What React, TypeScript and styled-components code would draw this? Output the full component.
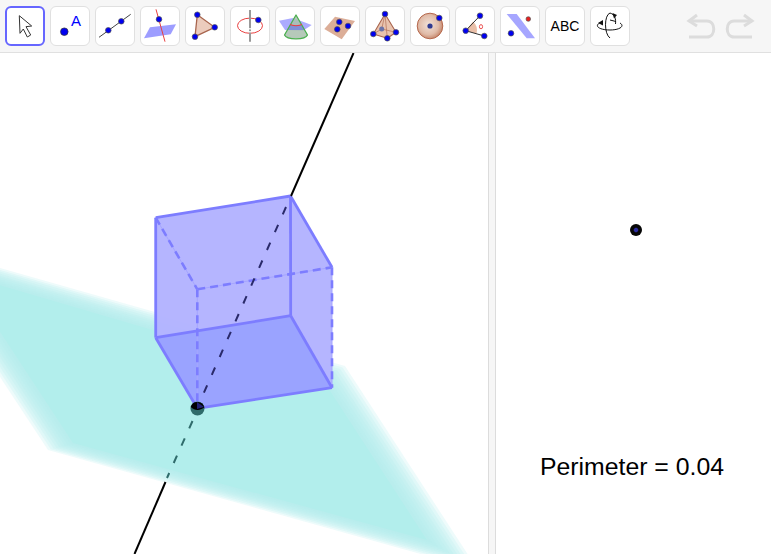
import React from "react";
import styled, { createGlobalStyle } from "styled-components";

const Global = createGlobalStyle`
  html, body { margin: 0; padding: 0; background: #fff; }
  body { font-family: "Liberation Sans", Arial, sans-serif; overflow: hidden; }
`;

const Page = styled.div`
  width: 771px;
  height: 554px;
  display: flex;
  flex-direction: column;
  background: #fff;
`;

const Toolbar = styled.div`
  height: 53px;
  box-sizing: border-box;
  flex: none;
  display: flex;
  align-items: flex-start;
  padding: 6px 0 0 5px;
  background: #f6f6f6;
  border-bottom: 1px solid #e0e0e0;
`;

const Tools = styled.div`
  display: flex;
  gap: 5px;
`;

const ToolButton = styled.div<{ $active?: boolean }>`
  width: 40px;
  height: 40px;
  box-sizing: border-box;
  display: flex;
  align-items: center;
  justify-content: center;
  background: #fff;
  border-radius: 6px;
  border: ${(p) => (p.$active ? "2px solid #6666ff" : "1px solid #e0e0e0")};
  font-size: 14px;
  color: #000;
  overflow: hidden;
`;

const History = styled.div`
  margin-left: 56px;
  margin-top: 7px;
  display: flex;
  gap: 9px;
`;

const Main = styled.div`
  flex: 1;
  display: flex;
  min-height: 0;
`;

const GraphicsView = styled.div`
  width: 488px;
  flex: none;
  overflow: hidden;
  svg { display: block; }
`;

const Splitter = styled.div`
  width: 8px;
  flex: none;
  box-sizing: border-box;
  background: #f6f6f6;
  border-left: 1px solid #dcdcdc;
  border-right: 1px solid #dcdcdc;
`;

const PlaneView = styled.div`
  flex: 1;
  position: relative;
  background: #fff;
`;

const Point = styled.div`
  position: absolute;
  left: 134px;
  top: 171px;
  width: 12px;
  height: 12px;
  border-radius: 50%;
  background: radial-gradient(circle, #2c2ca0 0 1.6px, #060606 2.8px);
`;

const Label = styled.div`
  position: absolute;
  left: 44px;
  top: 400px;
  font-size: 24.8px;
  line-height: 28px;
  color: #000;
  white-space: nowrap;
`;

const SoftPath = styled.path`
  filter: blur(0.7px);
`;

const Dot = ({ x, y, r = 2.8, c = "#0000f0" }: { x: number; y: number; r?: number; c?: string }) => (
  <circle cx={x} cy={y} r={r} fill={c} stroke="#555" strokeWidth={0.7} />
);

const Icon = ({ children }: { children: React.ReactNode }) => (
  <svg width="38" height="38" viewBox="1 1 38 38">{children}</svg>
);

const icons: React.ReactNode[] = [
  <svg width="36" height="36" viewBox="2 2 36 36" key="move">
    <path d="M14.3 9.7 L26.7 20 L21 20.7 L25.7 29 L22.3 31 L18.3 23 L15 27.3 Z" fill="#fff" stroke="#333" strokeWidth="1" strokeLinejoin="round" />
  </svg>,
  <Icon key="point">
    <circle cx="14.3" cy="25.7" r="3.8" fill="#0000f0" stroke="#333" strokeWidth="0.7" />
    <text x="26" y="20" textAnchor="middle" fontFamily="Liberation Sans" fontSize="15" fill="#0000ff">A</text>
  </Icon>,
  <Icon key="line">
    <line x1="4" y1="31.3" x2="35.7" y2="8.3" stroke="#444" strokeWidth="1" />
    <Dot x={13.3} y={24.3} />
    <Dot x={26.3} y={15.3} />
  </Icon>,
  <Icon key="perp">
    <SoftPath d="M4 32.3 L10 21.3 L36 18.3 L30.7 28.3 Z" fill="#9d9dff" />
    <line x1="16" y1="3.3" x2="25" y2="35.7" stroke="#e84040" strokeWidth="1" />
    <Dot x={19} y={13.3} />
  </Icon>,
  <Icon key="tri">
    <path d="M12.3 8.7 L29.7 21.3 L10 30.7 Z" fill="#ecccbd" stroke="#a8654e" strokeWidth="1.3" />
    <Dot x={12.3} y={8.7} />
    <Dot x={29.7} y={21.3} />
    <Dot x={10} y={30.7} />
  </Icon>,
  <Icon key="circle">
    <ellipse cx="20" cy="19.7" rx="12.5" ry="7.6" fill="none" stroke="#e84040" strokeWidth="1" />
    <line x1="20" y1="4" x2="20" y2="35.7" stroke="#999" strokeWidth="2" />
    <line x1="20" y1="22" x2="20" y2="27" stroke="#eee" strokeWidth="2" strokeDasharray="1.5 1.5" />
    <Dot x={28.3} y={14} />
  </Icon>,
  <Icon key="cone">
    <SoftPath d="M4 14.7 L18 12 L36.7 19 L28 24.7 L10 24 Z" fill="#9d9dff" opacity="0.85" />
    <path d="M21 9 L9.5 29 A11.7 4.7 0 0 0 32.5 29 Z" fill="#a9bfae" opacity="0.85" />
    <path d="M15 19 L27 19 L30 24 L12 24 Z" fill="#7f8fd8" />
    <path d="M21 9 L9.5 29 A11.7 4.7 0 0 0 32.5 29 Z" fill="none" stroke="#4caf50" strokeWidth="1.3" strokeLinejoin="round" />
    <path d="M15.2 18.2 A6 2 0 0 0 26.8 18.2" fill="none" stroke="#e84040" strokeWidth="1.1" />
  </Icon>,
  <Icon key="plane">
    <SoftPath d="M4.3 23 L15 10.7 L35 15 L21.7 33.3 Z" fill="#dcae98" />
    <Dot x={19.3} y={16} />
    <Dot x={28} y={20} />
    <Dot x={17.3} y={23.3} />
  </Icon>,
  <Icon key="pyramid">
    <path d="M20 8 L8.3 28 L22.3 32.3 L31 26.3 Z" fill="#e9c3ae" stroke="#a8654e" strokeWidth="1.1" strokeLinejoin="round" />
    <path d="M20 8 L22.3 32.3 M8.3 28 L16.7 23 L31 26.3 M20 8 L16.7 23" fill="none" stroke="#b87a62" strokeWidth="0.8" />
    <Dot x={20} y={8} />
    <Dot x={8.3} y={28} />
    <Dot x={22.3} y={32.3} />
    <Dot x={31} y={26.3} />
    <circle cx="16.7" cy="23" r="2.5" fill="#6c74a8" />
  </Icon>,
  <Icon key="sphere">
    <defs>
      <radialGradient id="sph" cx="45%" cy="45%" r="55%">
        <stop offset="0" stopColor="#f1e2d9" />
        <stop offset="0.7" stopColor="#e0bba8" />
        <stop offset="1" stopColor="#c88c72" />
      </radialGradient>
    </defs>
    <circle cx="20" cy="20" r="12.8" fill="url(#sph)" stroke="#b5694e" strokeWidth="1" />
    <circle cx="20" cy="20" r="2.6" fill="#2f3a90" />
    <Dot x={29.3} y={12} />
  </Icon>,
  <Icon key="angle">
    <path d="M10.7 24.7 L18 15.5 A12 12 0 0 1 21.5 27.7 Z" fill="#eabfa8" />
    <path d="M25 9.7 L10.7 24.7 L29.3 30" fill="none" stroke="#333" strokeWidth="1" />
    <Dot x={25} y={9.7} />
    <Dot x={10.7} y={24.7} />
    <Dot x={29.3} y={30} />
    <ellipse cx="26" cy="20.7" rx="1.6" ry="2.1" fill="none" stroke="#e84040" strokeWidth="0.9" />
  </Icon>,
  <Icon key="parallel">
    <SoftPath d="M6.7 8 L16.7 8 L35 32.3 L26.7 32.3 Z" fill="#a6a6ff" />
    <Dot x={28.3} y={13} c="#e82020" r={2.3} />
    <Dot x={11} y={27.3} />
  </Icon>,
  <span key="abc">ABC</span>,
  <Icon key="rotate">
    <path d="M12 16 C3 19 8 24 20 24 C30 24 35 20 30 17" fill="none" stroke="#111" strokeWidth="1" />
    <path d="M20 7 C14 9 14 28 20 32 M20 7 C25 8.5 26 13 25.5 18 M20 14 C22 14.5 24 15 26 15.5" fill="none" stroke="#111" strokeWidth="1" />
    <path d="M22.5 7 L24 12.5 L27 9 Z" fill="#111" />
    <path d="M8 17 L13 14 L13 19.5 Z" fill="#111" />
  </Icon>,
];

const ArrowIcon = ({ flip }: { flip?: boolean }) => (
  <svg width="30" height="28" viewBox="0 0 30 28">
    <g transform={flip ? "translate(30 0) scale(-1 1)" : undefined} fill="none" stroke="#dcdcdc" strokeWidth="3">
      <path d="M11 2 L3 8 L11 13" strokeLinejoin="miter" />
      <path d="M3.5 8 H21 C30 8 30 24 21 24 H3" />
    </g>
  </svg>
);

type P = [number, number];
const outer: P[] = [[-88, 243], [345, 366], [478, 570], [48, 450]];
const inner: P[] = [[-38, 274], [323, 380], [427, 540], [73, 443]];
const STEPS = 9;
const layers = Array.from({ length: STEPS + 1 }, (_, i) =>
  outer.map((o, k) => {
    const t = i / STEPS;
    return `${o[0] + (inner[k][0] - o[0]) * t},${o[1] + (inner[k][1] - o[1]) * t}`;
  }).join(" ")
);

const A: P = [155.7, 217.7], B: P = [290.5, 196], C: P = [332, 267.3], D: P = [197.3, 289.3];
const E: P = [155.7, 337.7], F: P = [290.7, 315.7], G: P = [332, 387.7], H: P = [197.3, 408.3];
const poly = (...p: P[]) => p.map((q) => q.join(",")).join(" ");
const EDGE = "#7d7dff";

const Edge = ({ a, b, w = 2.8 }: { a: P; b: P; w?: number }) => (
  <line x1={a[0]} y1={a[1]} x2={b[0]} y2={b[1]} stroke={EDGE} strokeWidth={w} />
);
const Hidden = ({ a, b }: { a: P; b: P }) => (
  <g>
    <line x1={a[0]} y1={a[1]} x2={b[0]} y2={b[1]} stroke="#a5a5ff" strokeWidth={1} />
    <line x1={a[0]} y1={a[1]} x2={b[0]} y2={b[1]} stroke={EDGE} strokeWidth={2.6} strokeDasharray="8 5" />
  </g>
);

const Scene = () => (
  <svg width="488" height="501" viewBox="0 53 488 501">
    {layers.map((pts, i) => (
      <polygon key={i} points={pts} fill="#b2eeec" opacity={i === STEPS ? 1 : 0.22} />
    ))}
    <polygon points={poly(A, B, C, G, H, E)} fill="#b3b3ff" opacity={0.97} />
    <polygon points={poly(E, F, G, H)} fill="#9aa3ff" />
    <Edge a={A} b={B} />
    <Edge a={A} b={E} />
    <Edge a={B} b={C} />
    <Edge a={B} b={F} />
    <Edge a={E} b={F} />
    <Edge a={F} b={G} />
    <Edge a={E} b={H} />
    <Edge a={H} b={G} />
    <Hidden a={A} b={D} />
    <Hidden a={D} b={C} />
    <Hidden a={D} b={H} />
    <Hidden a={C} b={G} />
    <line x1="353.5" y1="53" x2="291" y2="196" stroke="#000" strokeWidth="2" />
    <line x1="286" y1="207" x2="202" y2="397" stroke="#2a2a6a" strokeWidth="2" strokeDasharray="8 11.5" />
    <circle cx="197.5" cy="408.5" r="7" fill="#2f6b6b" />
    <path d="M190.7 407 A7 7 0 0 1 204.3 407.5 C200 410.5 195 411 190.7 407 Z" fill="#000" />
    <path d="M197 402 L204 407 L197 409 Z" fill="#2a2a90" opacity="0.8" />
    <line x1="192.5" y1="421" x2="167" y2="478" stroke="#2f6b6b" strokeWidth="2" strokeDasharray="8 11" />
    <line x1="165.5" y1="482" x2="134.5" y2="554" stroke="#000" strokeWidth="2" />
  </svg>
);

export default function App() {
  return (
    <Page>
      <Global />
      <Toolbar>
        <Tools>
          {icons.map((icon, i) => (
            <ToolButton key={i} $active={i === 0}>{icon}</ToolButton>
          ))}
        </Tools>
        <History>
          <ArrowIcon />
          <ArrowIcon flip />
        </History>
      </Toolbar>
      <Main>
        <GraphicsView><Scene /></GraphicsView>
        <Splitter />
        <PlaneView>
          <Point />
          <Label>Perimeter = 0.04</Label>
        </PlaneView>
      </Main>
    </Page>
  );
}
